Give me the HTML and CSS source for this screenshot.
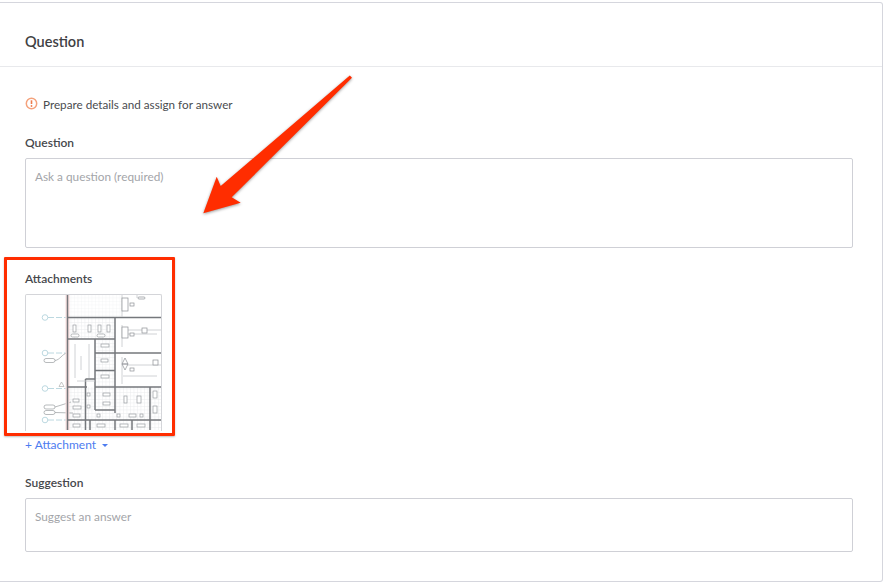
FILE: index.html
```html
<!DOCTYPE html>
<html lang="en">
<head>
    <meta charset="UTF-8">
    <title>Question</title>
    <link rel="stylesheet" href="styles.css">
</head>
<body>
    <div class="card">
        <h1 class="card-title">Question</h1>
        <div class="card-body">
            <p class="note">
                <svg class="note-icon" width="13" height="13" viewBox="0 0 13 13">
                    <circle cx="6.500" cy="6.500" r="5.200" fill="none" stroke="#f4a27c" stroke-width="1.500"/>
                    <path d="M6.500 3.300v3.700" stroke="#ee7c4c" stroke-width="1.600" fill="none"/>
                    <circle cx="6.500" cy="9" r=".9" fill="#ee7c4c"/>
                </svg>
                Prepare details and assign for answer
            </p>

            <label class="field-label" for="question">Question</label>
            <textarea class="input input-question" id="question" placeholder="Ask a question (required)"></textarea>

            <div class="field-label label-attachments">Attachments</div>
            <div class="thumb">
                <svg width="136" height="136" viewBox="1 1 136 136">
                    <defs>
                        <pattern id="grid" width="3.500" height="3.500" patternUnits="userSpaceOnUse">
                            <path d="M3.500 0H0V3.500" fill="none" stroke="#dfe1e4" stroke-width=".6"/>
                        </pattern>
                        <filter id="soft"><feGaussianBlur stdDeviation=".45"/></filter>
                    </defs>
                    <g filter="url(#soft)">
                        <rect x="42" y="0" width="55" height="23" fill="url(#grid)" opacity=".5"/>
                        <rect x="42" y="23" width="48" height="22" fill="url(#grid)"/>
                        <rect x="70" y="45" width="20" height="48" fill="url(#grid)"/>
                        <rect x="42" y="93" width="94" height="43" fill="url(#grid)"/>

                        <!-- gridline bubbles -->
                        <g fill="none" stroke="#b4d4dc" stroke-width=".9">
                            <circle cx="20" cy="23.500" r="2.800"/>
                            <circle cx="20" cy="59" r="2.800"/>
                            <circle cx="20" cy="94.500" r="2.800"/>
                            <circle cx="20" cy="126" r="2.800"/>
                            <path d="M23 23.500H41M23 59H41M23 94.500H41M23 126H41" stroke-dasharray="6 2"/>
                        </g>

                        <!-- tags -->
                        <g fill="#fff" stroke="#999da1" stroke-width=".7">
                            <rect x="19" y="64.500" width="11" height="4" rx="2"/>
                            <rect x="19" y="111" width="11" height="4" rx="2"/>
                            <rect x="19" y="116.500" width="11" height="4" rx="2"/>
                            <path d="M30 66.500C35 66 37 60 42 59M30 113L46 108M30 118.500L48 119" fill="none"/>
                            <path d="M36.500 88l-2.500 4.500h5z" stroke="#b0b0b0"/>
                        </g>

                        <!-- walls -->
                        <path d="M42.500 0V136" stroke="#f8dede" stroke-width="4"/>
                        <g fill="none" stroke="#75787c" stroke-width="1.500">
                            <path d="M42.500 0V136"/>
                            <path d="M42 23.500H136M90 23.500V93M42 45H90M70 45V116M70 59H136M70 76.500H90"/>
                            <path d="M42 93H62M60.500 85H70M60.500 85V136M70 93H136M90 93V119M70 116H90M125 93V126M42 126H136"/>
                            <path d="M65 126V136M90 126V136M107 126V136M125 126V136"/>
                        </g>

                        <!-- fixtures -->
                        <g fill="#fff" stroke="#999da1" stroke-width=".7">
                            <rect x="48" y="31" width="3" height="7"/>
                            <rect x="63" y="31" width="3" height="7"/>
                            <rect x="73" y="31" width="3" height="7"/>
                            <rect x="82" y="31" width="3" height="7"/>
                            <rect x="46" y="40" width="8" height="3" rx="1.500"/>
                            <rect x="72" y="40" width="8" height="3" rx="1.500"/>
                            <rect x="76" y="50" width="8" height="3"/>
                            <rect x="76" y="65" width="7" height="3"/>
                            <rect x="76" y="81" width="8" height="3"/>
                            <rect x="78" y="99" width="7" height="3"/>
                            <rect x="78" y="108" width="7" height="3"/>
                            <rect x="48" y="105" width="6" height="3"/>
                            <rect x="48" y="112" width="8" height="3"/>
                            <rect x="48" y="120" width="7" height="3"/>
                            <rect x="62" y="99" width="3" height="3"/>
                            <rect x="62" y="111" width="3" height="3"/>
                            <rect x="99" y="102" width="3" height="7"/>
                            <rect x="112" y="102" width="4" height="7"/>
                            <rect x="128" y="97" width="4" height="7"/>
                            <rect x="128" y="112" width="4" height="7"/>
                            <rect x="72" y="120" width="3" height="3"/>
                            <rect x="92" y="120" width="3" height="3"/>
                            <rect x="104" y="120" width="7" height="3"/>
                            <rect x="115" y="120" width="3" height="3"/>
                            <rect x="72" y="130" width="8" height="3"/>
                            <rect x="95" y="130" width="8" height="3"/>
                            <rect x="112" y="130" width="8" height="3"/>
                            <rect x="48" y="130" width="7" height="3"/>
                        </g>

                        <!-- mechanical rooms -->
                        <g fill="none" stroke="#c4c7ca" stroke-width=".8">
                            <path d="M97 0V23M97 31V53M97 63V90M112 0V4"/>
                            <path d="M98 36H136M98 40H132M98 71H136M98 82H132"/>
                            <path d="M50 50V84M64 50V84M56 62V76M52 87H70"/>
                        </g>
                        <g fill="#fff" stroke="#8d9195" stroke-width=".7">
                            <rect x="97" y="4" width="6" height="13"/>
                            <rect x="97" y="33" width="6" height="11"/>
                            <rect x="117" y="34" width="5" height="5"/>
                            <path d="M97 70l3-6 3 6zM97 70l3 6 3-6z"/>
                            <rect x="105" y="9" width="4" height="3"/>
                            <rect x="105" y="39" width="4" height="3"/>
                            <rect x="105" y="74" width="4" height="3"/>
                            <rect x="113" y="3" width="7" height="2" rx="1"/>
                            <rect x="128" y="66" width="5" height="5"/>
                        </g>
                    </g>
                </svg>
            </div>
            <a class="add-link" href="#">+ Attachment <span class="caret"></span></a>

            <label class="field-label label-suggestion" for="suggestion">Suggestion</label>
            <textarea class="input input-suggestion" id="suggestion" placeholder="Suggest an answer"></textarea>
        </div>
    </div>

    <!-- screenshot annotations -->
    <div class="callout-box"></div>
    <svg class="callout-arrow" width="884" height="583" viewBox="0 0 884 583">
        <polygon points="349.800,75.600 352,77.800 231.700,197.300 240.700,202.700 203.300,213.300 216.700,176.700 220.700,186" fill="#ff2d00"/>
    </svg>
</body>
</html>
```

FILE: styles.css
```css
html, body {
    margin: 0;
    height: 583px;
    overflow: hidden;
    background: #fff;
}

body {
    font-family: Lato, "Open Sans", sans-serif;
    color: #3c3e41;
}

.card {
    box-sizing: border-box;
    width: 883px;
    height: 580px;
    margin-top: 2px;
    border: 1px solid #d5d6dd;
    border-left: none;
    border-radius: 0 3px 3px 0;
}

.card-title {
    box-sizing: border-box;
    height: 64px;
    margin: 0;
    padding: 0 25px;
    line-height: 77px;
    font-size: 14.500px;
    font-weight: 600;
    color: #3f4144;
    border-bottom: 1px solid #e8e9ec;
}

.card-body {
    padding: 0 29px 0 25px;
}

.note {
    display: flex;
    align-items: center;
    gap: 5px;
    height: 16px;
    margin: 29px 0 0;
    font-size: 11.700px;
    color: #4a4c50;
}

.note-icon {
    flex: none;
    margin-top: -1px;
}

.field-label {
    display: block;
    height: 14px;
    margin-top: 24px;
    font-size: 12px;
    line-height: 14px;
    font-weight: 600;
    color: #46484c;
}

.input {
    display: block;
    box-sizing: border-box;
    width: 828px;
    margin: 8px 0 0;
    padding: 10px 9px;
    border: 1px solid #cfd0d6;
    border-radius: 2px;
    outline: none;
    resize: none;
    font-family: inherit;
    font-size: 11.800px;
    line-height: 15px;
    background: #fff;
}

.input::placeholder {
    color: #a3a5a9;
    opacity: 1;
}

.input-question {
    height: 90px;
}

.input-suggestion {
    height: 54px;
}

.label-attachments {
    margin-top: 24px;
}

.thumb {
    box-sizing: border-box;
    width: 137px;
    height: 137px;
    margin-top: 8px;
    overflow: hidden;
    border: 1px solid #d4d5d9;
    border-bottom: none;
    border-radius: 2px 2px 0 0;
}

.thumb svg {
    display: block;
}

.add-link {
    display: block;
    margin-top: 6px;
    height: 16px;
    font-size: 12px;
    line-height: 16px;
    color: #4d7cf0;
    text-decoration: none;
}

.caret {
    display: inline-block;
    width: 0;
    height: 0;
    margin-left: 3px;
    vertical-align: 2px;
    border-left: 3.500px solid transparent;
    border-right: 3.500px solid transparent;
    border-top: 3.500px solid #4d7cf0;
}

.label-suggestion {
    margin-top: 23px;
}

.callout-box {
    position: absolute;
    left: 4px;
    top: 257px;
    width: 165px;
    height: 173px;
    border: 3px solid #ff2d00;
    border-radius: 1px;
    box-shadow: 0 1px 2px rgba(0, 0, 0, 0.25);
}

.callout-arrow {
    position: absolute;
    left: 0;
    top: 0;
    filter: drop-shadow(0 1px 1.500px rgba(0, 0, 0, 0.4));
}
```
